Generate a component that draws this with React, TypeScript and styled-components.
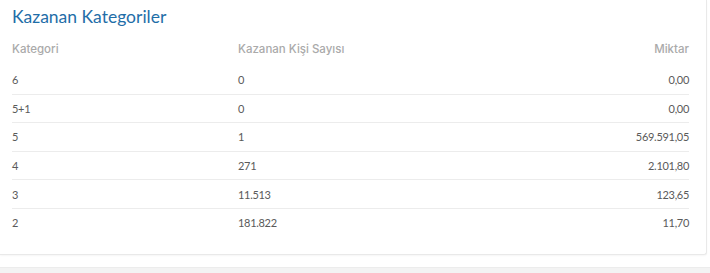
import React from 'react';
import styled, { createGlobalStyle } from 'styled-components';

interface IWinnerRow {
  category: string;
  winners: string;
  amount: string;
}

const rows: IWinnerRow[] = [
  { category: '6', winners: '0', amount: '0,00' },
  { category: '5+1', winners: '0', amount: '0,00' },
  { category: '5', winners: '1', amount: '569.591,05' },
  { category: '4', winners: '271', amount: '2.101,80' },
  { category: '3', winners: '11.513', amount: '123,65' },
  { category: '2', winners: '181.822', amount: '11,70' },
];

const GlobalStyle = createGlobalStyle`
  body {
    margin: 0;
    background: #fff;
    font-family: Lato, "Open Sans", sans-serif;
  }
`;

const Page = styled.div`
  min-height: 273px;
  display: flex;
  flex-direction: column;
`;

const Card = styled.section`
  width: 707px;
  box-sizing: border-box;
  padding: 5px 17px 17px 12px;
  background: #fff;
  border: 1px solid #e9e9e9;
  border-left: none;
  border-top: none;
  border-radius: 0 0 3px 0;
  box-shadow: 0 1px 2px rgba(0, 0, 0, 0.04);
`;

const Title = styled.h2`
  margin: 0;
  font-size: 17.5px;
  line-height: 24px;
  font-weight: 400;
  color: #1f6ea8;
`;

const Table = styled.table`
  width: 100%;
  margin-top: 12px;
  border-collapse: collapse;
`;

const HeadCell = styled.th<{ $right?: boolean; $w?: string }>`
  padding: 0 0 9px;
  text-align: ${({ $right }) => ($right ? 'right' : 'left')};
  width: ${({ $w }) => $w || 'auto'};
  font-family: Inter, Lato, sans-serif;
  font-size: 11.5px;
  font-weight: 500;
  color: #aaaaaa;
  line-height: 16px;
`;

const Row = styled.tr`
  & + & td {
    border-top: 1px solid #ececec;
  }
`;

const Cell = styled.td<{ $right?: boolean }>`
  height: 27.6px;
  padding: 0;
  text-align: ${({ $right }) => ($right ? 'right' : 'left')};
  font-size: 11px;
  font-weight: 400;
  letter-spacing: -0.3px;
  color: #5a5a5a;
`;

const Band = styled.div`
  margin-top: 12px;
  flex: 1;
  background: #f3f3f3;
  border-top: 1px solid #ececec;
`;

const App: React.FC = () => (
  <>
    <GlobalStyle />
    <Page>
      <Card>
        <Title>Kazanan Kategoriler</Title>
        <Table>
          <thead>
            <tr>
              <HeadCell $w="226px">Kategori</HeadCell>
              <HeadCell>Kazanan Kişi Sayısı</HeadCell>
              <HeadCell $right>Miktar</HeadCell>
            </tr>
          </thead>
          <tbody>
            {rows.map((row) => (
              <Row key={row.category}>
                <Cell>{row.category}</Cell>
                <Cell>{row.winners}</Cell>
                <Cell $right>{row.amount}</Cell>
              </Row>
            ))}
          </tbody>
        </Table>
      </Card>
      <Band />
    </Page>
  </>
);

export default App;
